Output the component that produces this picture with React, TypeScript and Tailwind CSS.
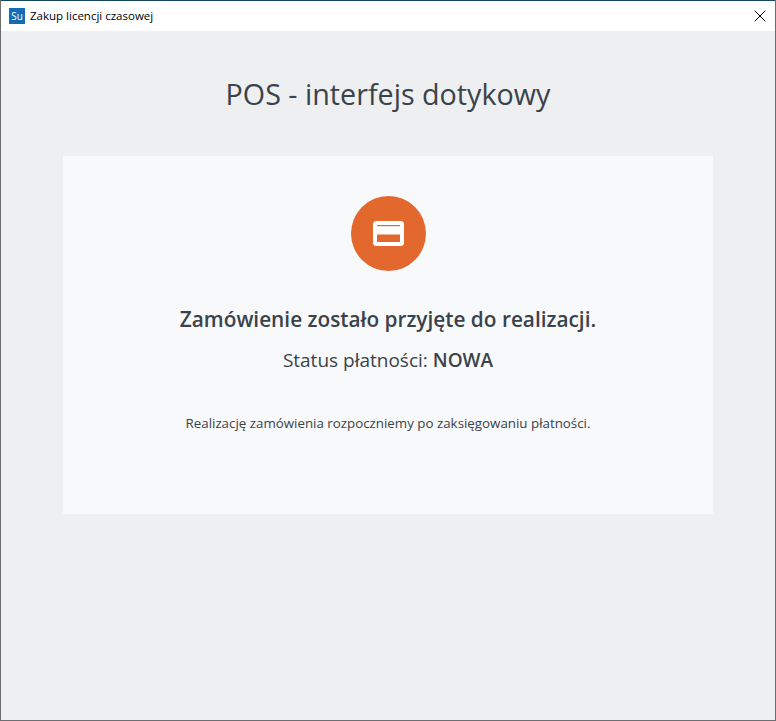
import { X } from "lucide-react";

export default function App() {
  return (
    <div className="w-[776px] h-[721px] flex flex-col overflow-hidden bg-[#eeeff1] border-x border-b border-[#6b6f72] font-['Open_Sans',sans-serif] text-[#3a424a]">
      {/* Title bar */}
      <div className="h-[31px] shrink-0 bg-white border-t border-[#17475f] flex items-center pl-[8px] pr-[5px]">
        <div className="w-[16px] h-[16px] bg-[#0f6cb5] text-white text-[10px] leading-none flex items-center justify-center">
          Su
        </div>
        <span className="ml-[5px] text-[11.5px] text-black">Zakup licencji czasowej</span>
        <X className="ml-auto text-black" size={20} strokeWidth={1.2} />
      </div>

      {/* Content */}
      <div className="flex-1 flex flex-col items-center">
        <h1 className="mt-[43px] text-[28.7px] leading-[40px]">POS - interfejs dotykowy</h1>
        <div className="mt-[42px] w-[650px] h-[358px] bg-[#f8f9fb] flex flex-col items-center pt-[40px]">
          <div className="w-[75px] h-[75px] rounded-full bg-[#e2682e] flex items-center justify-center">
            <svg width="31" height="25" viewBox="0 0 31 25">
              <rect width="31" height="25" rx="3.5" fill="white" />
              <rect x="4" y="4" width="23" height="1.2" fill="#e2682e" />
              <rect x="4" y="13.5" width="23" height="7.5" fill="#e2682e" />
            </svg>
          </div>
          <p className="mt-[33px] text-[20.8px] leading-[30px] font-semibold">Zamówienie zostało przyjęte do realizacji.</p>
          <p className="mt-[13px] text-[19px] leading-[26px]">
            Status płatności: <span className="font-semibold">NOWA</span>
          </p>
          <p className="mt-[40px] text-[13.33px] leading-[20px]">Realizację zamówienia rozpoczniemy po zaksięgowaniu płatności.</p>
        </div>
      </div>
    </div>
  );
}
